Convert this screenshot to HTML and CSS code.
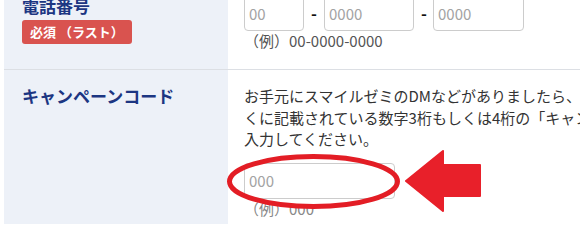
FILE: index.html
```html
<!DOCTYPE html>
<html lang="ja">
<head>
<meta charset="utf-8">
<title>お申し込みフォーム</title>
<link rel="stylesheet" href="styles.css">
</head>
<body>
<div class="page">
  <div class="form">
    <div class="row row-phone">
      <div class="label">
        <div class="label-text">電話番号</div>
        <span class="badge">必須 （ラスト）</span>
      </div>
      <div class="field">
        <div class="phone">
          <input class="input in-2" type="text" placeholder="00">
          <span class="dash">-</span>
          <input class="input in-4" type="text" placeholder="0000">
          <span class="dash">-</span>
          <input class="input in-4b" type="text" placeholder="0000">
        </div>
        <div class="example">（例）00-0000-0000</div>
      </div>
    </div>
    <div class="row row-campaign">
      <div class="label">
        <div class="label-text">キャンペーンコード</div>
      </div>
      <div class="field">
        <p class="desc">お手元にスマイルゼミのDMなどがありましたら、お名前の近<br>くに記載されている数字3桁もしくは4桁の「キャンペーンコード」を<br>入力してください。</p>
        <input class="input in-code" type="text" placeholder="000">
        <div class="example ex-code">（例）000</div>
      </div>
    </div>
  </div>
  <svg class="annot" width="580" height="224" viewBox="0 0 580 224" aria-hidden="true">
    <ellipse cx="313.5" cy="181.5" rx="84" ry="25" fill="none" stroke="#e31d25" stroke-width="5"/>
    <polygon points="406,181 443,151 443,165 480,165 480,196 443,196 443,211" fill="#e8202a" stroke="#e8202a" stroke-width="2" stroke-linejoin="round"/>
  </svg>
</div>
</body>
</html>
```

FILE: styles.css
```css
html, body {
  margin: 0;
  padding: 0;
  overflow: hidden;
  background: #ffffff;
}

.page {
  position: relative;
  width: 580px;
  height: 224px;
  overflow: hidden;
  font-family: "Noto Sans CJK JP", "Noto Sans", sans-serif;
}

.form {
  margin-top: -17px;
  margin-left: 4px;
  width: 900px;
}

.row {
  display: grid;
  grid-template-columns: 224px 1fr;
  border-bottom: 1px solid #dcdfe4;
}

.label {
  background: #edf1f8;
  padding-left: 18px;
}

.label-text {
  color: #1c3682;
  font-size: 17px;
  font-weight: 700;
  line-height: 22px;
}

.badge {
  display: inline-block;
  margin-top: 3px;
  width: 110px;
  height: 24px;
  line-height: 24px;
  background: #d9534f;
  color: #ffffff;
  font-size: 13px;
  font-weight: 700;
  border-radius: 3px;
  padding-left: 8px;
  box-sizing: border-box;
  white-space: nowrap;
}

.field {
  padding-left: 16px;
  color: #333333;
}

.row-phone .label,
.row-phone .field {
  padding-top: 12px;
  padding-bottom: 18px;
}

.row-campaign .label,
.row-campaign .field {
  padding-top: 15px;
  padding-bottom: 20px;
}

.phone {
  display: flex;
  align-items: center;
}

.input {
  box-sizing: border-box;
  height: 36px;
  border: 1px solid #cccccc;
  border-radius: 4px;
  padding: 0 4px;
  font-family: "Noto Sans CJK JP", "Noto Sans", sans-serif;
  font-size: 15px;
  color: #333333;
  background: #ffffff;
  outline: none;
}

.input::placeholder {
  color: #a3a3a3;
}

.in-2 { width: 60px; }
.in-4 { width: 90px; }
.in-4b { width: 91px; }
.in-code { width: 151px; display: block; margin-top: 13px; }

.dash {
  width: 20px;
  text-align: center;
  font-size: 16px;
  font-weight: 700;
  color: #111111;
}

.dash + .in-4b {
  margin-left: -1px;
}

.example {
  color: #555555;
  font-size: 15px;
  line-height: 20px;
}

.ex-code {
  margin-top: 0;
  color: #888888;
}

.desc {
  margin: 0;
  font-size: 15px;
  line-height: 21.5px;
  white-space: nowrap;
  color: #333333;
}

.annot {
  position: absolute;
  top: 0;
  left: 0;
}
```
